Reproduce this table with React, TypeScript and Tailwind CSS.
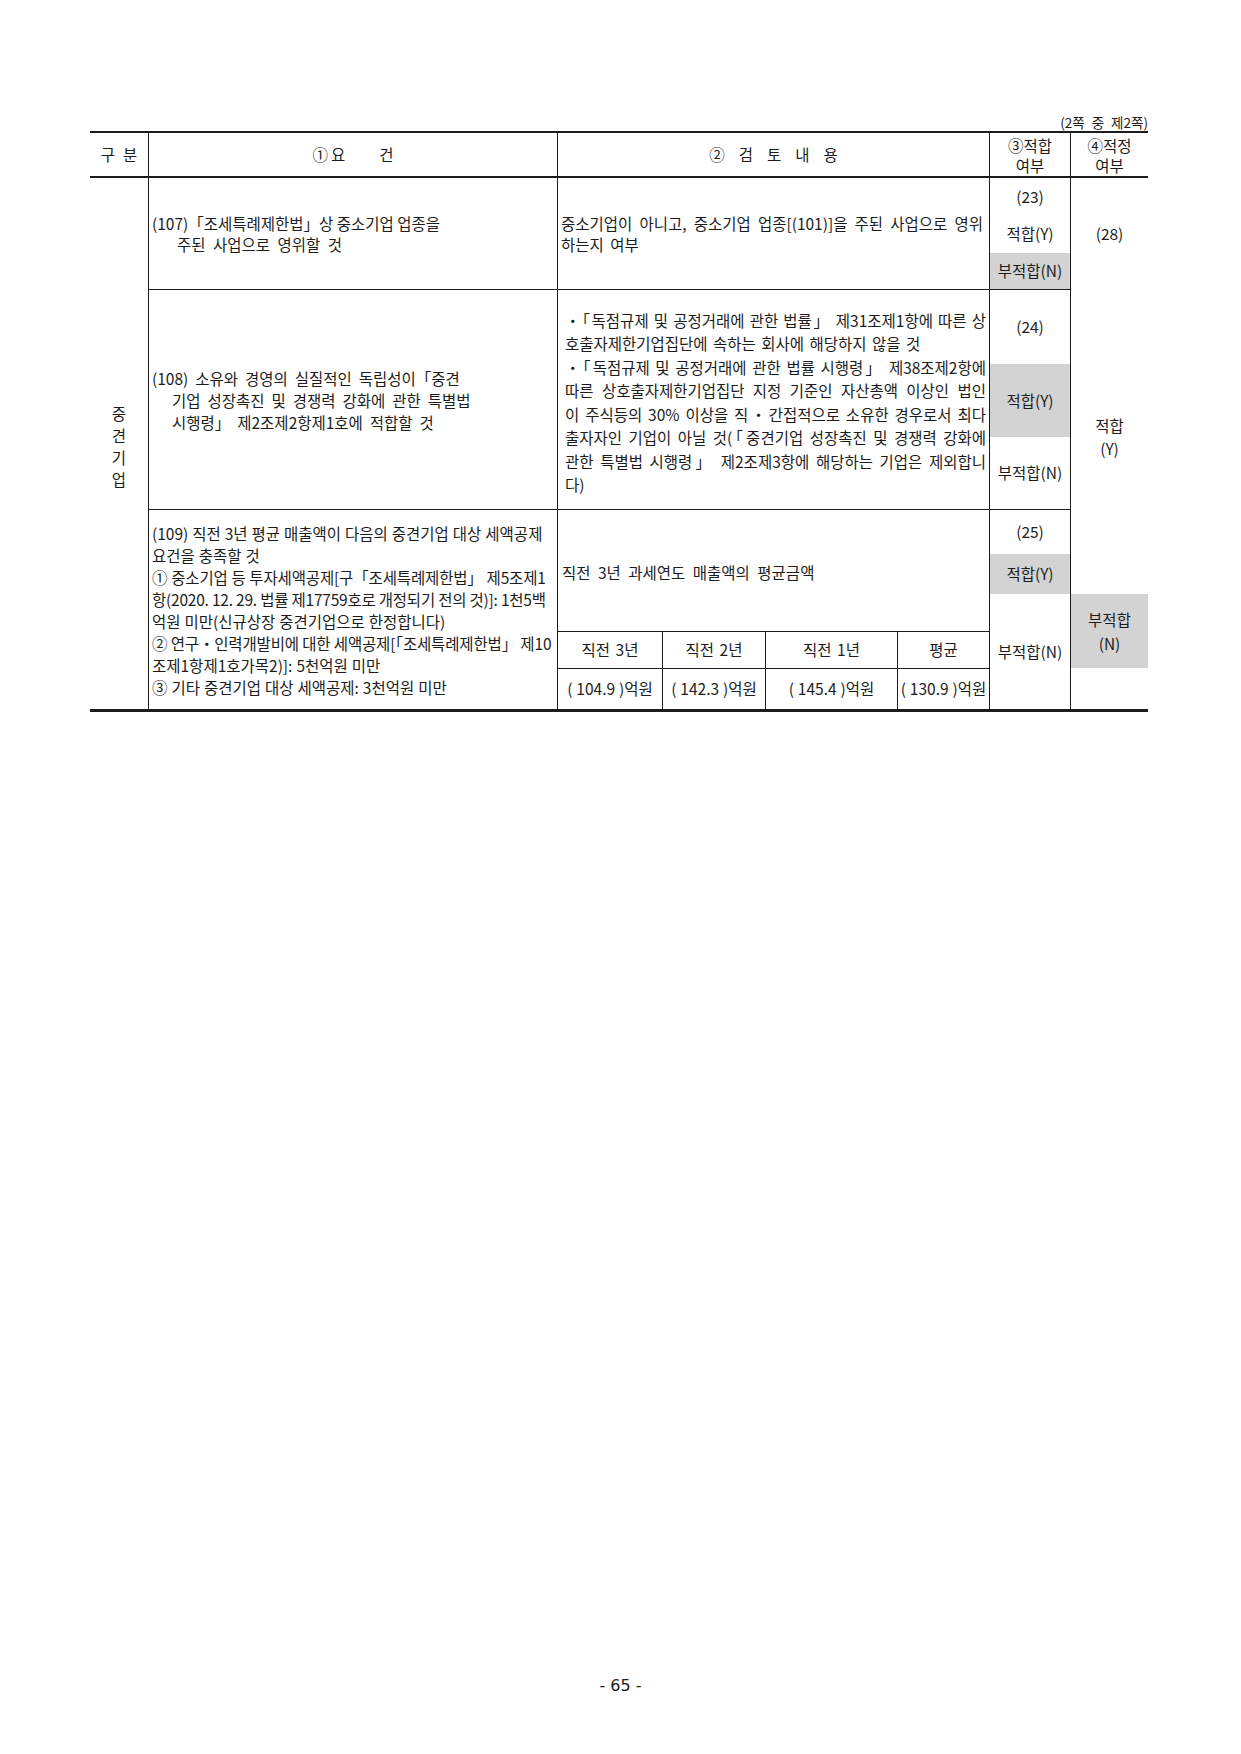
import React from "react";

const B = "border-[#1c1c1c]";

function J({ children }: { children: React.ReactNode }) {
  return (
    <div className="whitespace-nowrap text-justify [text-align-last:justify] [word-spacing:0px]">
      {children}
    </div>
  );
}

function L({ children, cls = "" }: { children: React.ReactNode; cls?: string }) {
  return <div className={"whitespace-nowrap " + cls}>{children}</div>;
}

export default function App() {
  return (
    <div className="w-[1241px] h-[1754px] bg-white flex flex-col font-['Noto_Sans_CJK_KR',sans-serif] text-[15.5px] text-[#1c1c1c]">
      <div className="pt-[113px] pl-[90px]">
        <div className="w-[1058px]">
          <div className="text-right text-[13.5px] leading-[18px] [word-spacing:4px]">(2쪽 중 제2쪽)</div>

          <div
            className={
              "grid grid-cols-[58px_409px_432px_81px_78px] grid-rows-[45px_112px_220px_199px] border-t-2 border-b-[3px] " +
              B
            }
          >
            {/* Header */}
            <div className={"col-start-1 row-start-1 border-b-2 flex items-center justify-center gap-[8px] " + B}>
              <span>구</span>
              <span>분</span>
            </div>
            <div className={"col-start-2 row-start-1 border-l border-b-2 flex items-center justify-center " + B}>
              <span>①</span>
              <span className="ml-[3px]">요</span>
              <span className="ml-[34px]">건</span>
            </div>
            <div className={"col-start-3 row-start-1 border-l border-b-2 flex items-center justify-center gap-[14px] " + B}>
              <span>②</span>
              <span>검</span>
              <span>토</span>
              <span>내</span>
              <span>용</span>
            </div>
            <div className={"col-start-4 row-start-1 border-l border-b-2 flex flex-col items-center justify-center leading-[20px] " + B}>
              <div>③적합</div>
              <div>여부</div>
            </div>
            <div className={"col-start-5 row-start-1 border-b-2 border-l flex flex-col items-center justify-center leading-[20px] " + B}>
              <div>④적정</div>
              <div>여부</div>
            </div>

            {/* 구분 */}
            <div className="col-start-1 row-start-2 row-span-3 flex flex-col items-center justify-center pt-[4px] leading-[22px]">
              <div>중</div>
              <div>견</div>
              <div>기</div>
              <div>업</div>
            </div>

            {/* Row 107 */}
            <div className={"col-start-2 row-start-2 border-l border-b flex flex-col justify-center pl-[3px] leading-[21px] [word-spacing:4px] " + B}>
              <L cls="[word-spacing:0px]">(107)「조세특례제한법」상 중소기업 업종을</L>
              <L cls="pl-[25px]">주된 사업으로 영위할 것</L>
            </div>
            <div className={"col-start-3 row-start-2 border-l border-b flex flex-col justify-center pl-[3px] pr-[6px] leading-[21px] [word-spacing:3px] " + B}>
              <J>중소기업이 아니고, 중소기업 업종[(101)]을 주된 사업으로 영위</J>
              <L>하는지 여부</L>
            </div>
            <div className={"col-start-4 row-start-2 border-l border-b flex flex-col " + B}>
              <div className="h-[37px] flex items-center justify-center">(23)</div>
              <div className="h-[38px] flex items-center justify-center">적합(Y)</div>
              <div className="flex-1 bg-[#d3d3d3] flex items-center justify-center">부적합(N)</div>
            </div>

            {/* ④ merged */}
            <div className={"col-start-5 row-start-2 row-span-3 border-l flex flex-col " + B}>
              <div className="h-[112px] flex items-center justify-center">(28)</div>
              <div className="h-[304px] flex flex-col items-center pt-[124px] leading-[23px]">
                <div>적합</div>
                <div>(Y)</div>
              </div>
              <div className="h-[74px] bg-[#d3d3d3] flex flex-col items-center justify-center leading-[24px]">
                <div>부적합</div>
                <div>(N)</div>
              </div>
              <div className="flex-1" />
            </div>

            {/* Row 108 */}
            <div className={"col-start-2 row-start-3 border-l border-b flex flex-col justify-center pl-[3px] leading-[22px] [word-spacing:3.5px] " + B}>
              <L>(108) 소유와 경영의 실질적인 독립성이「중견</L>
              <L cls="pl-[20px]">기업 성장촉진 및 경쟁력 강화에 관한 특별법</L>
              <L cls="pl-[20px]">시행령」 제2조제2항제1호에 적합할 것</L>
            </div>
            <div className={"col-start-3 row-start-3 border-l border-b flex flex-col justify-center pt-[6px] pl-[7px] pr-[3px] leading-[23.5px] [word-spacing:2px] " + B}>
              <J>・「독점규제 및 공정거래에 관한 법률」 제31조제1항에 따른 상</J>
              <L>호출자제한기업집단에 속하는 회사에 해당하지 않을 것</L>
              <J>・「독점규제 및 공정거래에 관한 법률 시행령」 제38조제2항에</J>
              <J>따른 상호출자제한기업집단 지정 기준인 자산총액 이상인 법인</J>
              <J>이 주식등의 30% 이상을 직・간접적으로 소유한 경우로서 최다</J>
              <J>출자자인 기업이 아닐 것(「중견기업 성장촉진 및 경쟁력 강화에</J>
              <J>관한 특별법 시행령」 제2조제3항에 해당하는 기업은 제외합니</J>
              <L>다)</L>
            </div>
            <div className={"col-start-4 row-start-3 border-l border-b flex flex-col " + B}>
              <div className="h-[74px] flex items-center justify-center">(24)</div>
              <div className="h-[73px] bg-[#d3d3d3] flex items-center justify-center">적합(Y)</div>
              <div className="flex-1 flex items-center justify-center">부적합(N)</div>
            </div>

            {/* Row 109 */}
            <div className={"col-start-2 row-start-4 border-l flex flex-col justify-center pl-[3px] leading-[22px] [word-spacing:0.5px] " + B}>
              <L>(109) 직전 3년 평균 매출액이 다음의 중견기업 대상 세액공제</L>
              <L>요건을 충족할 것</L>
              <L cls="tracking-[-0.15px]">① 중소기업 등 투자세액공제[구「조세특례제한법」 제5조제1</L>
              <L cls="tracking-[-0.22px] [word-spacing:0px]">항(2020. 12. 29. 법률 제17759호로 개정되기 전의 것)]: 1천5백</L>
              <L>억원 미만(신규상장 중견기업으로 한정합니다)</L>
              <L cls="tracking-[-0.15px] [word-spacing:0px]">② 연구・인력개발비에 대한 세액공제[「조세특례제한법」 제10</L>
              <L>조제1항제1호가목2)]: 5천억원 미만</L>
              <L>③ 기타 중견기업 대상 세액공제: 3천억원 미만</L>
            </div>
            <div className={"col-start-3 row-start-4 border-l flex flex-col " + B}>
              <div className="h-[121px] flex items-center pl-[4px] pt-[5px] [word-spacing:4px]">
                직전 3년 과세연도 매출액의 평균금액
              </div>
              <div className={"border-t flex flex-col " + B}>
                <div className={"h-[37px] border-b flex [word-spacing:2px] " + B}>
                  <div className={"w-[105px] border-r flex items-center justify-center " + B}>직전 3년</div>
                  <div className={"w-[103px] border-r flex items-center justify-center " + B}>직전 2년</div>
                  <div className={"w-[132px] border-r flex items-center justify-center " + B}>직전 1년</div>
                  <div className="flex-1 flex items-center justify-center">평균</div>
                </div>
                <div className="h-[40px] flex [word-spacing:0.5px]">
                  <div className={"w-[105px] border-r flex items-center justify-center whitespace-nowrap " + B}>( 104.9 )억원</div>
                  <div className={"w-[103px] border-r flex items-center justify-center whitespace-nowrap " + B}>( 142.3 )억원</div>
                  <div className={"w-[132px] border-r flex items-center justify-center whitespace-nowrap " + B}>( 145.4 )억원</div>
                  <div className="flex-1 flex items-center justify-center whitespace-nowrap">( 130.9 )억원</div>
                </div>
              </div>
            </div>
            <div className={"col-start-4 row-start-4 border-l flex flex-col " + B}>
              <div className="h-[44px] flex items-center justify-center">(25)</div>
              <div className="h-[40px] bg-[#d3d3d3] flex items-center justify-center">적합(Y)</div>
              <div className="flex-1 flex items-center justify-center">부적합(N)</div>
            </div>
          </div>
        </div>
      </div>

      <div className="mt-auto mb-[58px] text-center leading-[20px] text-[16px] font-['DejaVu_Sans',sans-serif] [word-spacing:0px]">
        - 65 -
      </div>
    </div>
  );
}
